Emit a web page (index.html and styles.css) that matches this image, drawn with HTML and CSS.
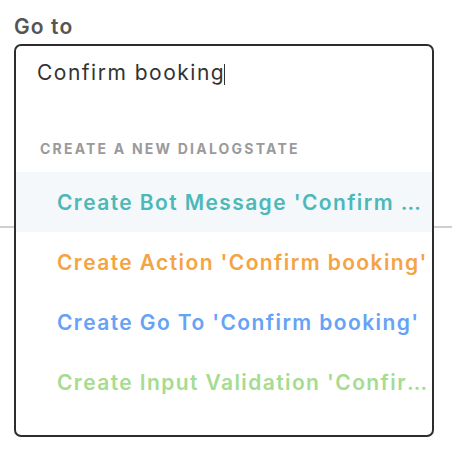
FILE: index.html
```html
<!DOCTYPE html>
<html>
<head>
<meta charset="utf-8">
<link rel="stylesheet" href="styles.css">
</head>
<body>
<div class="backdrop-rule"></div>
<div class="field">
  <div class="field-label">Go to</div>
  <div class="dropdown">
    <div class="input-line">Confirm booking<span class="caret"></span></div>
    <div class="group-title">Create a new dialogstate</div>
    <ul class="options">
      <li class="option option--bot is-active"><span class="option-text">Create Bot Message 'Confirm booking'</span></li>
      <li class="option option--action"><span class="option-text">Create Action 'Confirm booking'</span></li>
      <li class="option option--goto"><span class="option-text">Create Go To 'Confirm booking'</span></li>
      <li class="option option--validation"><span class="option-text">Create Input Validation 'Confirm booking'</span></li>
    </ul>
  </div>
</div>
</body>
</html>
```
FILE: styles.css
```css
html, body {
  margin: 0;
  padding: 0;
  background: #fff;
}
body {
  position: relative;
  width: 452px;
  height: 452px;
  overflow: hidden;
  font-family: "Inter", "Open Sans", sans-serif;
}
.backdrop-rule {
  position: absolute;
  left: 0;
  right: 0;
  top: 226px;
  height: 2px;
  background: #cfcfcf;
}
.field {
  position: relative;
  z-index: 1;
  padding: 15px 18px 0 14px;
}
.field-label {
  font-size: 21px;
  line-height: 24px;
  font-weight: 600;
  letter-spacing: 1.1px;
  color: #555;
  margin-bottom: 5px;
}
.dropdown {
  box-sizing: border-box;
  width: 420px;
  height: 393px;
  border: 2px solid #2d2d2d;
  border-radius: 7px;
  background: #fff;
  overflow: hidden;
}
.input-line {
  padding: 15px 0 0 21px;
  height: 60px;
  box-sizing: border-box;
  font-size: 21px;
  line-height: 24px;
  letter-spacing: 1.5px;
  color: #333;
}
.caret {
  display: inline-block;
  width: 1px;
  height: 21px;
  margin-left: -1px;
  background: #333;
  vertical-align: -5px;
}
.group-title {
  margin-top: 34px;
  padding-left: 24px;
  font-size: 14px;
  line-height: 18px;
  font-weight: 700;
  letter-spacing: 2.2px;
  color: #9a9a9a;
  text-transform: uppercase;
}
.options {
  list-style: none;
  margin: 14px 0 0;
  padding: 0;
}
.option {
  height: 60px;
  display: flex;
  align-items: center;
  padding: 0 4px 0 41px;
  font-size: 21px;
  font-weight: 600;
  letter-spacing: 1.4px;
}
.option-text {
  white-space: nowrap;
  overflow: hidden;
  text-overflow: ellipsis;
}
.is-active { background: #f4f8fb; }
.option--bot { color: #4cb8b8; }
.option--action { color: #f4a443; }
.option--goto { color: #66a2f6; }
.option--validation { color: #a5dc90; }
```
